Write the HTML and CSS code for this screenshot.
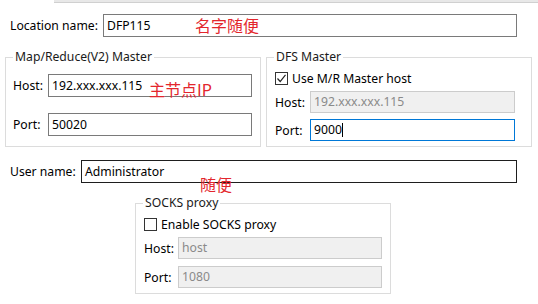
FILE: index.html
```html
<!DOCTYPE html>
<html lang="en">

<head>
    <meta charset="UTF-8">
    <title>Hadoop Location</title>
    <link rel="stylesheet" href="styles.css">
</head>

<body>
    <div class="tabbar"></div>

    <div class="row loc">
        <span class="label">Location name:</span>
        <div class="field">DFP115</div>
    </div>

    <div class="groups">
        <fieldset class="box mr">
            <legend>Map/Reduce(V2) Master</legend>
            <div class="row">
                <span class="label">Host:</span>
                <div class="field">192.xxx.xxx.115</div>
            </div>
            <div class="row second">
                <span class="label">Port:</span>
                <div class="field">50020</div>
            </div>
        </fieldset>

        <fieldset class="box dfs">
            <legend>DFS Master</legend>
            <div class="check">
                <span class="tick">
                    <svg width="11" height="11" viewBox="0 0 11 11"><path d="M1.5 5.5 L4.2 8.5 L9.5 1.8" fill="none" stroke="#222" stroke-width="1.2"/></svg>
                </span>
                Use M/R Master host
            </div>
            <div class="row">
                <span class="label">Host:</span>
                <div class="field off">192.xxx.xxx.115</div>
            </div>
            <div class="row second">
                <span class="label">Port:</span>
                <div class="field focus">9000<span class="caret"></span></div>
            </div>
        </fieldset>
    </div>

    <div class="row user">
        <span class="label">User name:</span>
        <div class="field">Administrator</div>
    </div>

    <fieldset class="box socks">
        <legend>SOCKS proxy</legend>
        <div class="check">
            <span class="tick"></span>
            Enable SOCKS proxy
        </div>
        <div class="row">
            <span class="label">Host:</span>
            <div class="field off">host</div>
        </div>
        <div class="row second">
            <span class="label">Port:</span>
            <div class="field off">1080</div>
        </div>
    </fieldset>

    <!-- red notes written on the screenshot -->
    <span class="note note-name">名字随便</span>
    <span class="note note-ip">主节点IP</span>
    <span class="note note-user">随便</span>
</body>
</html>
```

FILE: styles.css
```css
body {
    margin: 0;
    width: 538px;
    height: 304px;
    overflow: hidden;
    position: relative;
    background: #fff;
    color: #000;
    font-family: "Noto Sans", "Noto Sans CJK SC", sans-serif;
    font-size: 12.2px;
}
.tabbar {
    margin-left: 54px;
    height: 2px;
    background: #e8e8e8;
    border-bottom: 1px solid #d0d0d0;
}
.row {
    display: flex;
    align-items: center;
}
.label {
    flex-shrink: 0;
    white-space: nowrap;
}
.field {
    box-sizing: border-box;
    flex-shrink: 0;
    height: 23px;
    line-height: 21px;
    padding-left: 3px;
    border: 1px solid #7a7a7a;
    background: #fff;
    white-space: nowrap;
}
.field.off {
    background: #f0f0f0;
    border-color: #cccccc;
    color: #8a8a8a;
}
.field.focus {
    border-color: #0078d7;
}
.caret {
    display: inline-block;
    width: 1px;
    height: 14px;
    background: #000;
    vertical-align: -3px;
}
.loc {
    margin: 11px 0 0 10px;
}
.loc .label {
    width: 93px;
}
.loc .field {
    width: 414px;
}
.groups {
    display: flex;
    gap: 5px;
    margin: 12px 0 0 5px;
}
.box {
    box-sizing: border-box;
    margin: 0;
    border: 1px solid #dcdcdc;
    min-width: 0;
}
.box legend {
    padding: 0 2px;
    margin-left: 0;
    line-height: 16px;
    color: #1a1a1a;
}
.mr {
    width: 256px;
    padding: 9px 7px 10px 7px;
}
.mr .label {
    width: 35px;
}
.mr .field {
    width: 204px;
}
.mr .second {
    margin-top: 16px;
}
.dfs {
    width: 266px;
    padding: 4px 15px 5px 8px;
}
.dfs legend {
    margin-left: -1px;
}
.dfs .label {
    width: 35px;
}
.dfs .field {
    width: 205px;
    height: 22px;
    line-height: 20px;
}
.dfs .row {
    margin-top: 4px;
}
.dfs .second {
    margin-top: 6px;
}
.check {
    display: flex;
    align-items: center;
    gap: 4px;
    height: 18px;
    white-space: nowrap;
}
.tick {
    box-sizing: border-box;
    width: 13px;
    height: 13px;
    border: 1px solid #333;
    background: #fff;
    display: flex;
    align-items: center;
    justify-content: center;
}
.user {
    margin: 13px 0 0 10px;
}
.user .label {
    width: 71px;
}
.user .field {
    width: 436px;
    border-color: #1e1e1e;
}
.socks {
    width: 256px;
    margin: 12px 0 0 135px;
    padding: 4px 7px 5px 8px;
}
.socks legend {
    margin-left: -1px;
}
.socks .label {
    width: 34px;
}
.socks .field {
    width: 204px;
    height: 22px;
    line-height: 20px;
}
.socks .row {
    margin-top: 4px;
}
.socks .second {
    margin-top: 7px;
}
.note {
    position: absolute;
    color: #e3262d;
    font-family: "Noto Sans CJK SC", "Noto Sans", sans-serif;
    font-size: 16px;
    line-height: 20px;
}
.note-name {
    left: 195px;
    top: 15px;
}
.note-ip {
    left: 149px;
    top: 79px;
}
.note-user {
    left: 200px;
    top: 174px;
}
```
